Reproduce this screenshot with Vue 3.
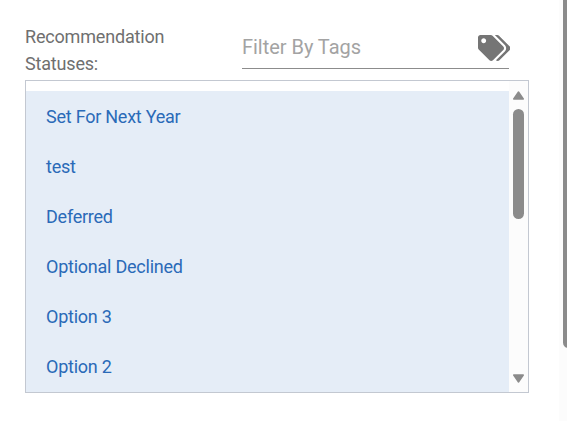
<template>
  <div class="page">
    <div class="content">
      <div class="header">
        <label class="title" for="tags">Recommendation Statuses:</label>
        <div class="filter">
          <input id="tags" type="text" v-model="filter" placeholder="Filter By Tags" />
          <svg class="tags" viewBox="0 0 640 512">
            <path
              d="M497.941 225.941L286.059 14.059A48 48 0 0 0 252.118 0H48C21.49 0 0 21.49 0 48v204.118a48 48 0 0 0 14.059 33.941l211.882 211.882c18.744 18.745 49.136 18.746 67.882 0l204.118-204.118c18.745-18.745 18.745-49.137 0-67.882zM112 160c-26.51 0-48-21.49-48-48s21.49-48 48-48 48 21.49 48 48-21.49 48-48 48zm513.941 133.823L421.823 497.941c-18.745 18.745-49.137 18.745-67.882 0l-.36-.36L527.64 323.522c16.999-16.999 26.362-39.6 26.362-63.64s-9.362-46.641-26.362-63.64L331.397 0h48.721a48 48 0 0 1 33.941 14.059l211.882 211.882c18.745 18.745 18.745 49.137 0 67.882z"
            />
          </svg>
        </div>
      </div>
      <div class="box">
        <ul class="list">
          <li v-for="item in statuses" :key="item">{{ item }}</li>
        </ul>
        <div class="scrollbar">
          <svg class="arrow" viewBox="0 0 11 9">
            <path d="M5.5 1L10.3 8H.7z" />
          </svg>
          <div class="thumb"></div>
          <svg class="arrow down" viewBox="0 0 11 9">
            <path d="M5.5 8L10.3 1H.7z" />
          </svg>
        </div>
      </div>
    </div>
    <div class="page-scrollbar">
      <div class="page-thumb"></div>
    </div>
  </div>
</template>
<script setup>
import { ref } from "vue";
const filter = ref("");
const statuses = ref([
  "Set For Next Year",
  "test",
  "Deferred",
  "Optional Declined",
  "Option 3",
  "Option 2",
]);
</script>
<style scoped>
.page {
  display: flex;
  justify-content: space-between;
  height: 421px;
  overflow: hidden;
  background: #fff;
  font-family: Roboto, sans-serif;
  font-size: 18px;
}
.content {
  width: 504px;
  padding: 23px 0 0 25px;
}
.header {
  display: flex;
  height: 57px;
}
.title {
  width: 217px;
  padding-right: 60px;
  box-sizing: border-box;
  line-height: 27px;
  letter-spacing: -0.18px;
  color: #6f6f6f;
}
.filter {
  display: flex;
  align-items: center;
  width: 267px;
  height: 46px;
  box-sizing: border-box;
  padding-top: 4px;
  border-bottom: 1px solid #8c8c8c;
}
input {
  flex: 1;
  min-width: 0;
  height: 30px;
  padding: 0 0 2px;
  box-sizing: border-box;
  border: none;
  outline: none;
  background: none;
  font-family: inherit;
  font-size: 20px;
  letter-spacing: -0.03px;
}
input::placeholder {
  color: #a3a3a3;
}
.tags {
  width: 32.5px;
  height: 26px;
  flex: none;
  margin: 1px -1px 0 0;
  fill: #757575;
}
.box {
  display: flex;
  height: 313px;
  box-sizing: border-box;
  border: 1px solid #c3c8d1;
  overflow: hidden;
}
.list {
  flex: 1;
  margin: 10px 0 0;
  padding: 0;
  list-style: none;
  background: #e5edf7;
}
.list li {
  height: 50px;
  padding: 0 20px;
  line-height: 51px;
  letter-spacing: -0.24px;
  color: #2a6ab8;
}
.scrollbar {
  display: flex;
  flex-direction: column;
  align-items: center;
  width: 19px;
  box-sizing: border-box;
  padding: 10px 0 9px;
  background: #fcfcfc;
}
.arrow {
  width: 11px;
  height: 9px;
  fill: #8b8b8b;
  stroke: #8b8b8b;
  stroke-width: 1.4;
  stroke-linejoin: round;
}
.thumb {
  width: 11px;
  height: 110px;
  margin-top: 9px;
  border-radius: 6px;
  background: #8b8b8b;
}
.down {
  margin-top: auto;
}
.page-scrollbar {
  width: 8px;
  background: #fcfcfc;
  overflow: hidden;
}
.page-thumb {
  width: 11px;
  height: 348px;
  margin-left: 4px;
  border-radius: 0 0 6px 6px;
  background: #8b8b8b;
}
</style>
